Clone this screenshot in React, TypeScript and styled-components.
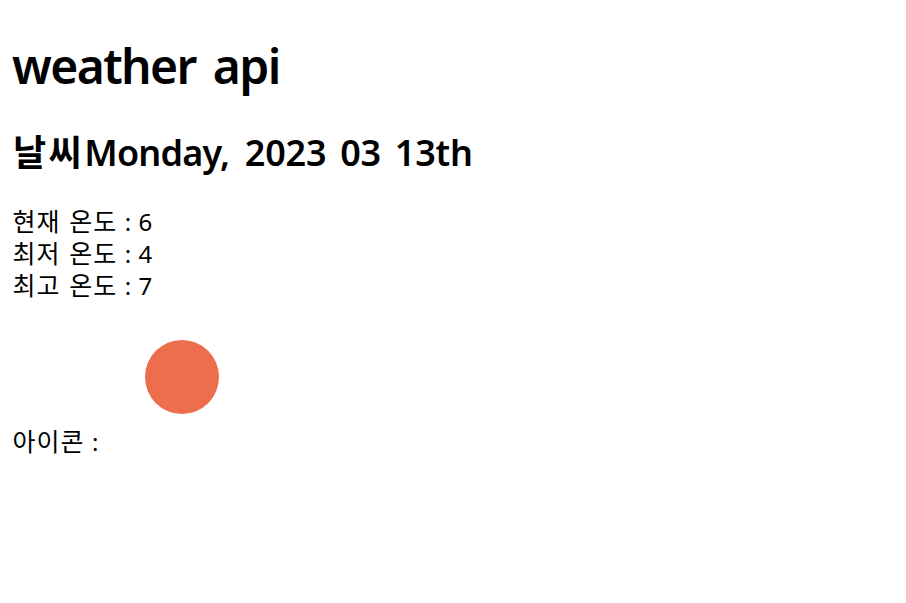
import React from "react";
import styled, { createGlobalStyle } from "styled-components";

const GlobalStyle = createGlobalStyle`
  body {
    margin: 0;
    background: #fff;
    color: #000;
    font-family: "Noto Sans", "Noto Sans CJK KR", sans-serif;
  }
`;
const Page = styled.main`
  padding: 33px 12px 0;
  white-space: pre;
`;
const Title = styled.h1`
  margin: 0;
  height: 66px;
  line-height: 66px;
  font-size: 48px;
  font-weight: 650;
  letter-spacing: -1.6px;
  word-spacing: 6px;
`;
const Subtitle = styled.h2`
  margin: 30px 0 0;
  height: 48px;
  line-height: 48px;
  font-size: 36px;
  font-weight: 600;
  letter-spacing: -0.8px;
  word-spacing: 6.5px;
`;
const Weather = styled.span`
  padding-left: 1px;
  letter-spacing: 2.5px;
`;
const DateNumbers = styled.span`
  padding-left: 0.5px;
  letter-spacing: -0.2px;
  word-spacing: 4.7px;
`;
const Readings = styled.section`
  margin-top: 29px;
`;
const Reading = styled.div`
  height: 32px;
  line-height: 32px;
  font-size: 24px;
`;
const Label = styled.span`
  padding-left: 0.5px;
  font-size: 25px;
  line-height: 1;
  letter-spacing: 1px;
  word-spacing: 1.3px;
`;
const Value = styled.span`
  word-spacing: 1.2px;
`;
const IconRow = styled.div`
  display: flex;
  align-items: flex-end;
  height: 156px;
  font-size: 24px;
  line-height: 32px;
`;
const IconLabel = styled.div`
  width: 95px;
`;
const Sun = styled.svg`
  width: 150px;
  height: 150px;
  margin-bottom: 6px;
`;

const readings = [
  { label: "현재 온도", value: 6 },
  { label: "최저 온도", value: 4 },
  { label: "최고 온도", value: 7 },
];

export default function App() {
  return (
    <>
      <GlobalStyle />
      <Page>
        <Title>weather api</Title>
        <Subtitle>
          <Weather>날씨</Weather>Monday, <DateNumbers>2023 03 13th</DateNumbers>
        </Subtitle>
        <Readings>
          {readings.map(({ label, value }) => (
            <Reading key={label}>
              <Label>{label}</Label><Value>{` : ${value}`}</Value>
            </Reading>
          ))}
          <IconRow>
            <IconLabel><Label>아이콘</Label><Value> :</Value></IconLabel>
            <Sun viewBox="0 0 150 150"><circle cx="75" cy="75" r="37" fill="#ec6e4c" /></Sun>
          </IconRow>
        </Readings>
      </Page>
    </>
  );
}
